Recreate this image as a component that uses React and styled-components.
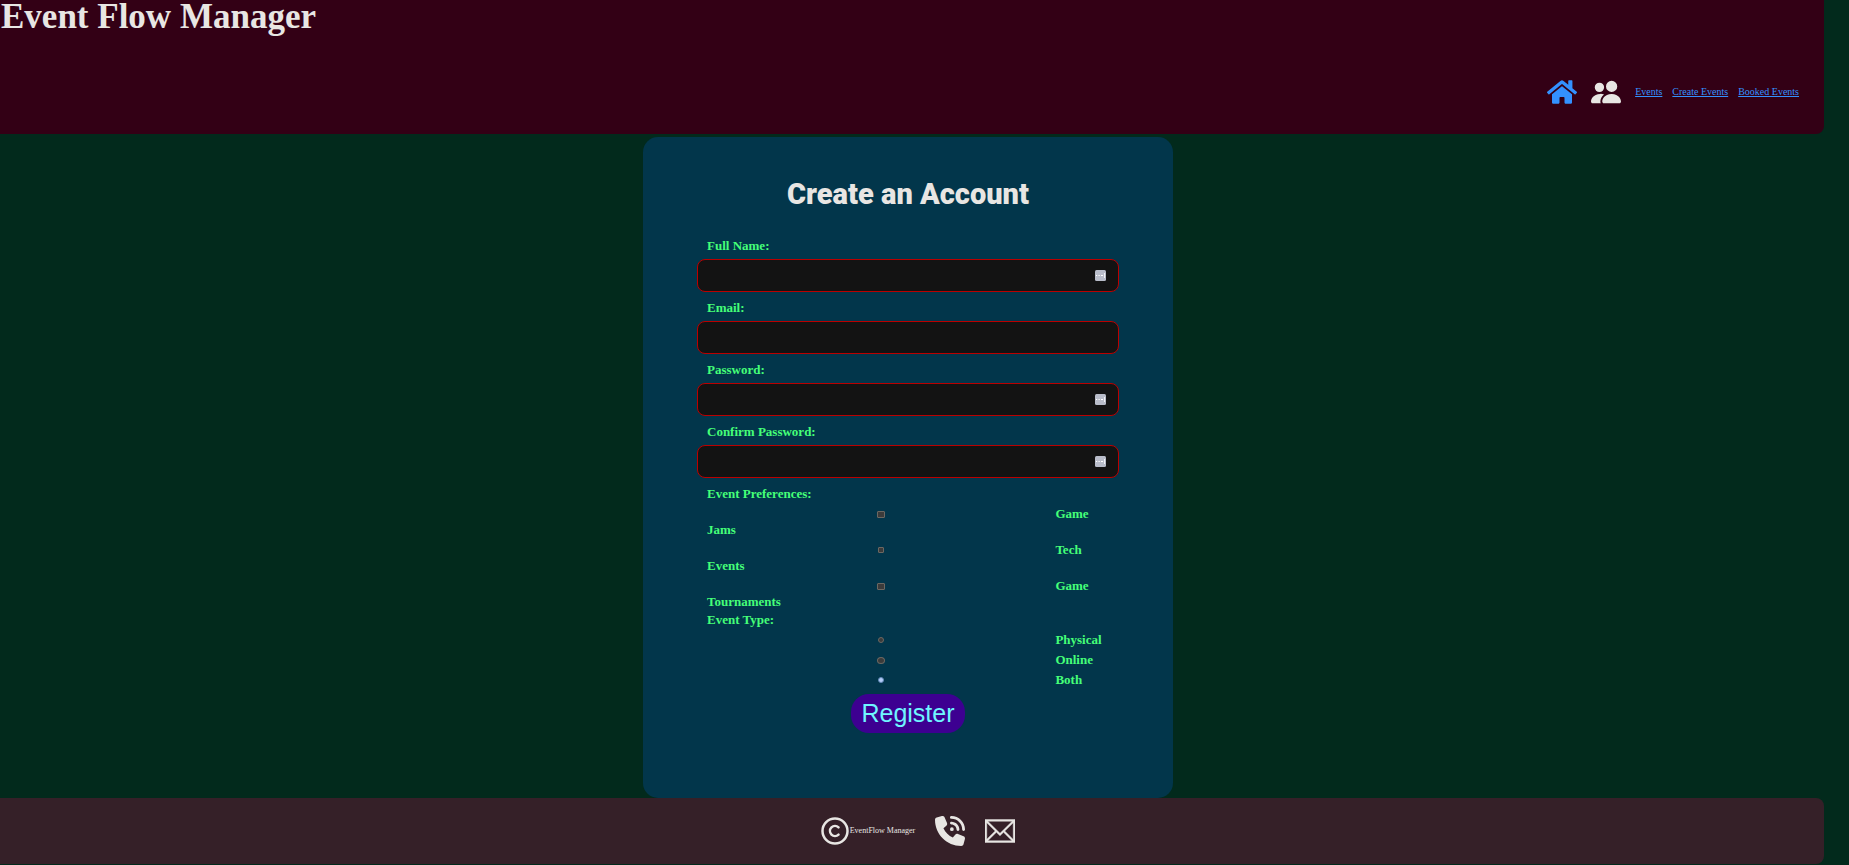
import React from "react";
import styled, { createGlobalStyle, css } from "styled-components";
import { FaHome } from "react-icons/fa";
import { FaPhoneVolume } from "react-icons/fa6";
import { BsFillPeopleFill } from "react-icons/bs";
import { TfiEmail } from "react-icons/tfi";
import { Copyright } from "lucide-react";

const GlobalStyle = createGlobalStyle`
  *, *::before, *::after { box-sizing: border-box; }
  body {
    margin: 0;
    background: #022a1c;
    color: #e8e6e3;
    font-family: "Liberation Serif", "Times New Roman", serif;
  }
`;

const Page = styled.div`
  min-height: 100vh;
  display: flex;
  flex-direction: column;
`;

const band = css`
  margin-right: 25px;
`;

const Header = styled.header`
  ${band}
  display: flex;
  flex-direction: column;
  gap: 43px;
  padding: 0 25px 27px 1px;
  border-radius: 0 0 8px 0;
  background: #330015;
`;

const SiteTitle = styled.h1`
  margin: 0;
  font-size: 35px;
  line-height: 34px;
`;

const Nav = styled.nav`
  display: flex;
  align-items: center;
  justify-content: flex-end;
  gap: 14px;
`;

const NavLinks = styled.div`
  display: flex;
  gap: 10px;
`;

const NavLink = styled.a`
  display: flex;
  color: #3391ff;
  font-size: 10px;
  line-height: 12px;
  text-decoration: underline;
`;

const IconLink = styled.a`
  display: flex;
  color: ${(p) => (p.$active ? "#3391ff" : "#e8e6e3")};
  svg { width: 30px; height: 30px; }
`;

const Main = styled.main`
  flex: 1;
  display: flex;
  justify-content: center;
  padding: 3px 33px 0 0;
`;

const Card = styled.form`
  width: 100%;
  max-width: 530px;
  padding: 38px 54px 64px;
  display: flex;
  flex-direction: column;
  border-radius: 15px;
  background: #02364b;
`;

const CardTitle = styled.h2`
  margin: 0 0 25px;
  font-family: Roboto, "Liberation Sans", sans-serif;
  font-size: 29px;
  font-weight: 900;
  line-height: 38px;
  text-align: center;
`;

const labelText = css`
  color: #45ff78;
  font-size: 13px;
  font-weight: bold;
  line-height: 16px;
`;

const Field = styled.div`
  display: flex;
  flex-direction: column;
  gap: 5px;
  margin-bottom: 8px;
`;

const FieldLabel = styled.label`
  ${labelText}
  padding-left: 10px;
`;

const InputWrap = styled.div`
  position: relative;
  display: flex;
`;

const TextInput = styled.input`
  width: 100%;
  height: 33px;
  padding: 0 30px 0 10px;
  border: 1px solid #bb0000;
  border-radius: 8px;
  background: #131313;
  color: #e8e6e3;
  font: inherit;
`;

const FillBadge = styled.svg`
  position: absolute;
  right: 13px;
  top: 11px;
  width: 11px;
  height: 11px;
`;

const Group = styled.fieldset`
  display: flex;
  flex-direction: column;
  min-width: 0;
  margin: 0;
  padding: 0 10px;
  border: 0;
`;

const GroupTitle = styled.legend`
  ${labelText}
  padding: 0;
  margin-bottom: 2px;
`;

const Option = styled.label`
  ${labelText}
  display: grid;
  grid-template-columns: 13fr 2fr;
  grid-auto-rows: 16px;
  align-items: center;
  padding: 2px 0;
`;

const Mark = styled.input`
  appearance: none;
  justify-self: center;
  width: ${(p) => (p.$small ? 6 : 8)}px;
  height: ${(p) => (p.$small ? 6 : 7)}px;
  margin: 0;
  border: 1px solid #6c6862;
  border-radius: ${(p) => (p.type === "radio" ? "50%" : "1px")};
  background: #3b3b3b;
  &:checked { border-color: #5f86b5; background: #b4cdf8; }
`;

const RegisterButton = styled.button`
  align-self: center;
  height: 39px;
  margin-top: 4px;
  padding: 0 10px;
  border: 0;
  border-radius: 18px;
  background: #3d0091;
  color: #6ff5ff;
  font-family: "Liberation Sans", Arial, sans-serif;
  font-size: 25px;
  line-height: 39px;
`;

const Footer = styled.footer`
  ${band}
  display: flex;
  align-items: center;
  justify-content: center;
  gap: 20px;
  height: 66px;
  margin-bottom: 1px;
  padding-left: 11px;
  border-radius: 0 8px 8px 0;
  background: #352028;
`;

const MailIcon = styled(TfiEmail)`
  stroke: currentColor;
  stroke-width: 0.25;
`;

const Rights = styled.div`
  display: flex;
  align-items: center;
  font-size: 8px;
  line-height: 10px;
`;

const fields = [
  { id: "name", label: "Full Name:", type: "text", badge: true },
  { id: "email", label: "Email:", type: "email" },
  { id: "password", label: "Password:", type: "password", badge: true },
  { id: "confirm", label: "Confirm Password:", type: "password", badge: true },
];

const preferences = [["Game", "Jams"], ["Tech", "Events"], ["Game", "Tournaments"]];
const eventTypes = ["Physical", "Online", "Both"];

function Badge() {
  return (
    <FillBadge viewBox="0 0 11 11" aria-hidden="true">
      <rect width="11" height="11" rx="1.5" fill="#b9bdca" />
      <path d="M1 5h1.200v1H1zM3.500 5h1.200v1H3.500zM6 5h2v1H6zM9 3h.8v5H9z" fill="#fff" />
    </FillBadge>
  );
}

export default function App() {
  return (
    <Page>
      <GlobalStyle />
      <Header>
        <SiteTitle>Event Flow Manager</SiteTitle>
        <Nav>
          <IconLink href="#home" aria-label="Home" $active><FaHome /></IconLink>
          <IconLink href="#account" aria-label="Account"><BsFillPeopleFill /></IconLink>
          <NavLinks>
            <NavLink href="#events">Events</NavLink>
            <NavLink href="#create">Create Events</NavLink>
            <NavLink href="#booked">Booked Events</NavLink>
          </NavLinks>
        </Nav>
      </Header>
      <Main>
        <Card onSubmit={(e) => e.preventDefault()}>
          <CardTitle>Create an Account</CardTitle>
          {fields.map((f) => (
            <Field key={f.id}>
              <FieldLabel htmlFor={f.id}>{f.label}</FieldLabel>
              <InputWrap>
                <TextInput id={f.id} type={f.type} />
                {f.badge && <Badge />}
              </InputWrap>
            </Field>
          ))}
          <Group>
            <GroupTitle>Event Preferences:</GroupTitle>
            {preferences.map(([first, second], i) => (
              <Option key={second}>
                <Mark type="checkbox" $small={i === 1} />
                <span>{first}</span>
                <span>{second}</span>
              </Option>
            ))}
          </Group>
          <Group>
            <GroupTitle>Event Type:</GroupTitle>
            {eventTypes.map((t, i) => (
              <Option key={t}>
                <Mark type="radio" name="type" $small={i !== 1} defaultChecked={t === "Both"} />
                <span>{t}</span>
              </Option>
            ))}
          </Group>
          <RegisterButton type="submit">Register</RegisterButton>
        </Card>
      </Main>
      <Footer>
        <Rights>
          <Copyright size={30} />
          <span>EventFlow Manager</span>
        </Rights>
        <IconLink href="#phone" aria-label="Phone"><FaPhoneVolume /></IconLink>
        <IconLink href="#email" aria-label="Email"><MailIcon /></IconLink>
      </Footer>
    </Page>
  );
}
